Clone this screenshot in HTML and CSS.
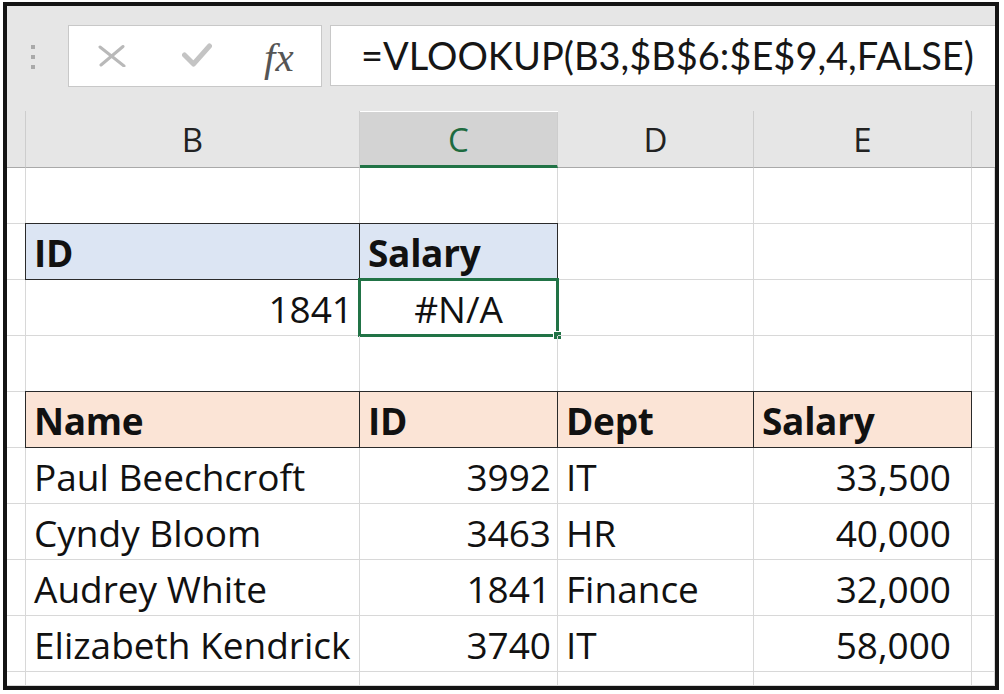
FILE: index.html
```html
<!DOCTYPE html>
<html lang="en">
<head>
<meta charset="utf-8">
<title>VLOOKUP #N/A</title>
<link rel="stylesheet" href="styles.css">
</head>
<body>
<div class="frame">
  <div class="fbar">
    <div class="grip"><i></i><i></i><i></i></div>
    <div class="fbtns">
      <svg class="ico-x" width="28" height="22" viewBox="0 0 28 22"><path d="M2 2 L26 21 M25 1.5 L3 20" stroke="#b9b9b9" stroke-width="3" fill="none" stroke-linecap="round"/></svg>
      <svg class="ico-ok" width="30" height="24" viewBox="0 0 30 24"><path d="M2.5 12 L11.5 21 L27.5 3" stroke="#c4c4c4" stroke-width="5" fill="none" stroke-linejoin="round" stroke-linecap="round"/></svg>
      <span class="fx">fx</span>
    </div>
    <div class="finput">=VLOOKUP(B3,$B$6:$E$9,4,FALSE)</div>
  </div>
  <div class="sheet">
    <div class="ch"></div>
    <div class="ch">B</div>
    <div class="ch sel">C</div>
    <div class="ch">D</div>
    <div class="ch">E</div>
    <div class="ch last"></div>

    <div class="c"></div><div class="c"></div><div class="c"></div><div class="c"></div><div class="c"></div><div class="c"></div>

    <div class="c"></div><div class="c bx blue b">ID</div><div class="c bx blue b">Salary</div><div class="c"></div><div class="c"></div><div class="c"></div>

    <div class="c"></div><div class="c r">1841</div><div class="c ctr active">#N/A<span class="selbox"><span class="handle"></span></span></div><div class="c"></div><div class="c"></div><div class="c"></div>

    <div class="c"></div><div class="c"></div><div class="c"></div><div class="c"></div><div class="c"></div><div class="c"></div>

    <div class="c"></div><div class="c bx peach b">Name</div><div class="c bx peach b">ID</div><div class="c bx peach b">Dept</div><div class="c bx peach b">Salary</div><div class="c"></div>

    <div class="c"></div><div class="c">Paul Beechcroft</div><div class="c r">3992</div><div class="c">IT</div><div class="c r num">33,500</div><div class="c"></div>
    <div class="c"></div><div class="c">Cyndy Bloom</div><div class="c r">3463</div><div class="c">HR</div><div class="c r num">40,000</div><div class="c"></div>
    <div class="c"></div><div class="c">Audrey White</div><div class="c r">1841</div><div class="c">Finance</div><div class="c r num">32,000</div><div class="c"></div>
    <div class="c"></div><div class="c">Elizabeth Kendrick</div><div class="c r">3740</div><div class="c">IT</div><div class="c r num">58,000</div><div class="c"></div>

    <div class="c short"></div><div class="c short"></div><div class="c short"></div><div class="c short"></div><div class="c short"></div><div class="c short"></div>
  </div>
</div>
</body>
</html>
```

FILE: styles.css
```css
html, body {
  margin: 0;
  padding: 0;
  background: #ffffff;
}

.frame {
  margin: 2px 0 0 3px;
  width: 988px;
  height: 680px;
  border: 4px solid #141414;
  background: #ffffff;
  overflow: hidden;
  font-family: "Open Sans", "Lato", sans-serif;
  color: #111;
}

/* formula bar */
.fbar {
  height: 105px;
  background: #e6e6e6;
  display: flex;
  align-items: flex-start;
  box-sizing: border-box;
  padding-top: 19px;
}

.grip {
  width: 61px;
  display: flex;
  flex-direction: column;
  align-items: flex-start;
  gap: 6px;
  padding: 20px 0 0 24px;
  box-sizing: border-box;
}

.grip i {
  display: block;
  width: 4px;
  height: 4px;
  background: #a9a9a9;
}

.fbtns {
  width: 254px;
  height: 62px;
  box-sizing: border-box;
  background: #fff;
  border: 1px solid #c8c8c8;
  display: flex;
  align-items: center;
}

.ico-x {
  margin-left: 29px;
}

.ico-ok {
  margin-left: 56px;
  margin-top: -2px;
}

.fx {
  margin-left: 52px;
  font-family: "Liberation Serif", "DejaVu Serif", serif;
  font-style: italic;
  font-size: 41px;
  line-height: 44px;
  color: #555;
  margin-top: 2px;
}

.finput {
  margin-left: 8px;
  flex: 1;
  height: 61px;
  box-sizing: border-box;
  background: #fff;
  border: 1px solid #c8c8c8;
  border-right: none;
  font-family: "Lato", "Open Sans", sans-serif;
  font-size: 38px;
  line-height: 58px;
  padding-left: 30px;
  color: #161616;
  white-space: nowrap;
}

/* sheet */
.sheet {
  display: grid;
  grid-template-columns: 19px 334px 198px 196px 218px 23px;
  grid-template-rows: 57px repeat(9, 56px) 14px;
}

.ch {
  background: #e6e6e6;
  border-right: 1px solid #cdcdcd;
  border-bottom: 1px solid #a9a9a9;
  display: flex;
  align-items: flex-end;
  justify-content: center;
  font-size: 33px;
  line-height: 40px;
  color: #222;
  padding-bottom: 7px;
  box-sizing: border-box;
}

.ch.last {
  border-right: none;
}

.ch.sel {
  background: #d3d3d3;
  color: #1d6b3f;
  border-bottom: 3px solid #217346;
  margin-top: 1px;
  padding-bottom: 5px;
}

.c {
  box-sizing: border-box;
  border-right: 1px solid #d8d8d8;
  border-bottom: 1px solid #d8d8d8;
  font-size: 37px;
  line-height: 40px;
  padding: 0 8px 6px 8px;
  display: flex;
  align-items: flex-end;
  white-space: nowrap;
  position: relative;
}

.c.r {
  justify-content: flex-end;
  padding-right: 6px;
}

.c.num {
  padding-right: 20px;
}

.c.ctr {
  justify-content: center;
}

.c.b {
  font-weight: 700;
  letter-spacing: -0.3px;
}

.c.bx {
  border-right-color: #2a2a2a;
  border-bottom-color: #2a2a2a;
  box-shadow: -1px 0 0 #2a2a2a, 0 -1px 0 #2a2a2a, -1px -1px 0 #2a2a2a;
}

.blue {
  background: #dce5f3;
}

.peach {
  background: #fbe4d6;
}

.selbox {
  position: absolute;
  left: -2px;
  top: -2px;
  right: -2px;
  bottom: -2px;
  border: 3px solid #217346;
}

.handle {
  position: absolute;
  right: -6px;
  bottom: -6px;
  width: 7px;
  height: 7px;
  background: #217346;
  border: 1px solid #fff;
}
```
